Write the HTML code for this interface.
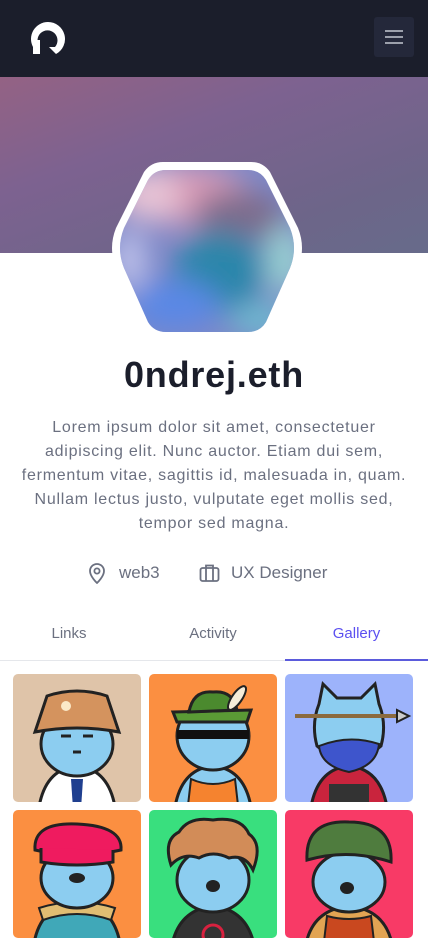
<!DOCTYPE html>
<html><head><meta charset="utf-8"><style>
*{margin:0;padding:0;box-sizing:border-box}
body{width:428px;height:926px;overflow:hidden;background:#fff;font-family:"Liberation Sans",sans-serif;position:relative}
.hdr{position:absolute;left:0;top:0;width:428px;height:77px;background:#1b1e2b}
.menu{position:absolute;left:374px;top:17px;width:40px;height:40px;background:#24283a;border-radius:3px}
.menu i{position:absolute;left:11px;width:18px;height:2px;background:#9ca0ab}
.banner{position:absolute;left:0;top:77px;width:428px;height:176px;background:linear-gradient(160deg,#946284 0%,#7d6290 35%,#6d6589 75%,#676b8a 100%)}
.name{position:absolute;left:0;top:354px;width:428px;text-align:center;font-size:36px;font-weight:bold;color:#1b1e2b;letter-spacing:0.8px}
.bio{position:absolute;left:0;top:416px;width:428px;text-align:center;font-size:16px;line-height:24px;color:#6b7080;letter-spacing:0.75px}
.meta{position:absolute;top:563px;font-size:17px;color:#6b7080}
.tab{position:absolute;top:625px;font-size:15px;color:#6b7080;text-align:center}
.tile{position:absolute;width:128px;height:128px;border-radius:5px;overflow:hidden}
</style></head><body>
<div class="hdr">
<svg style="position:absolute;left:29px;top:20px" width="38" height="37" viewBox="0 0 38 37"><path d="M19 2A17 17 0 0 0 4 27L11 27A10 10 0 1 1 26 27L20 27L27 34A17 17 0 0 0 19 2Z" fill="#fff"/><rect x="4" y="20" width="7" height="14" fill="#fff"/></svg>
<div class="menu"><i style="top:13px"></i><i style="top:19px"></i><i style="top:25px"></i></div>
</div>
<div class="banner"></div>
<svg style="position:absolute;left:100px;top:150px" width="215" height="195" viewBox="100 150 215 195">
<defs>
<clipPath id="c"><path d="M166 170 L248 170 Q260 170 266 180 L290 228 Q298 248 290 268 L266 322 Q260 332 248 332 L166 332 Q154 332 148 322 L124 268 Q116 248 124 228 L148 180 Q154 170 166 170Z"/></clipPath>
<filter id="b"><feGaussianBlur stdDeviation="14"/></filter>
</defs>
<path d="M163 162 L251 162 Q263 162 270 172 L298 228 Q306 248 298 268 L270 326 Q263 336 251 336 L163 336 Q151 336 144 326 L116 268 Q108 248 116 228 L144 172 Q151 162 163 162Z" fill="#fff"/>
<g clip-path="url(#c)">
<rect x="110" y="160" width="200" height="180" fill="#7d88c8"/>
<g filter="url(#b)">
<ellipse cx="180" cy="195" rx="70" ry="30" fill="#d79ab6"/>
<ellipse cx="150" cy="195" rx="30" ry="25" fill="#e8c4d6"/>
<ellipse cx="240" cy="215" rx="45" ry="25" fill="#7d6c8c"/>
<ellipse cx="220" cy="270" rx="45" ry="40" fill="#2b86aa"/>
<ellipse cx="285" cy="260" rx="18" ry="35" fill="#9ad4d2"/>
<ellipse cx="175" cy="305" rx="45" ry="25" fill="#5a88e6"/>
<ellipse cx="130" cy="260" rx="15" ry="30" fill="#c6c8ee"/>
<ellipse cx="260" cy="320" rx="30" ry="15" fill="#6cc0d0"/>
</g></g></svg>
<div class="name">0ndrej.eth</div>
<div class="bio">Lorem ipsum dolor sit amet, consectetuer<br>adipiscing elit. Nunc auctor. Etiam dui sem,<br>fermentum vitae, sagittis id, malesuada in, quam.<br>Nullam lectus justo, vulputate eget mollis sed,<br>tempor sed magna.</div>
<svg style="position:absolute;left:87px;top:562px" width="20" height="22" viewBox="0 0 20 22" fill="none" stroke="#6b7080" stroke-width="1.8"><path d="M10 21s-7-6.5-7-12a7 7 0 0114 0c0 5.5-7 12-7 12z"/><circle cx="10" cy="9" r="2.6"/></svg>
<div class="meta" style="left:119px">web3</div>
<svg style="position:absolute;left:199px;top:563px" width="21" height="20" viewBox="0 0 21 20" fill="none" stroke="#6b7080" stroke-width="1.8"><rect x="1.5" y="5" width="18" height="13" rx="2"/><path d="M7 18V2.5h7V18"/></svg>
<div class="meta" style="left:231px">UX Designer</div>
<div class="tab" style="left:0;width:138px">Links</div>
<div class="tab" style="left:143px;width:140px">Activity</div>
<div class="tab" style="left:285px;width:143px;color:#5b4ff0">Gallery</div>
<div style="position:absolute;left:0;top:660px;width:428px;height:1px;background:#e5e7eb"></div>
<div style="position:absolute;left:285px;top:659px;width:143px;height:2px;background:#5b5bdc"></div>

<div class="tile" style="left:13px;top:674px;background:#dfc4a9"><svg width="128" height="128"><path d="M25 140 Q30 95 64 92 Q98 95 103 140Z" fill="#fff" stroke="#222" stroke-width="3"/><path d="M58 105 L70 105 L68 135 L60 135Z" fill="#1f3f8f"/><ellipse cx="64" cy="70" rx="36" ry="32" fill="#8ccdf0" stroke="#222" stroke-width="3"/><path d="M48 62 L58 62 M70 62 L80 62 M60 78 L68 78" stroke="#222" stroke-width="3"/><path d="M22 58 L34 22 Q64 12 94 22 L106 58 Q64 50 22 58Z" fill="#d4935e" stroke="#222" stroke-width="3"/><circle cx="53" cy="32" r="5" fill="#fbe9c8"/></svg></div>
<div class="tile" style="left:149px;top:674px;background:#fb8f41"><svg width="128" height="128"><path d="M25 140 Q30 95 64 92 Q98 95 103 140Z" fill="#8ccdf0" stroke="#222" stroke-width="3"/><path d="M38 140 L42 105 Q64 115 86 105 L90 140Z" fill="#f5832f" stroke="#222" stroke-width="2"/><ellipse cx="64" cy="62" rx="36" ry="34" fill="#8ccdf0" stroke="#222" stroke-width="3"/><rect x="28" y="56" width="72" height="9" fill="#111"/><path d="M24 38 L102 36 L98 48 L28 48Z" fill="#5a9a35" stroke="#222" stroke-width="3"/><path d="M40 38 Q44 16 64 18 Q84 16 88 36Z" fill="#4b8a2e" stroke="#222" stroke-width="3"/><ellipse cx="88" cy="24" rx="5" ry="14" transform="rotate(35 88 24)" fill="#f5ecd8" stroke="#222" stroke-width="2"/></svg></div>
<div class="tile" style="left:285px;top:674px;background:#9db3fb"><svg width="128" height="128"><path d="M25 140 Q30 95 64 92 Q98 95 103 140Z" fill="#c9243d" stroke="#222" stroke-width="3"/><rect x="44" y="110" width="40" height="25" fill="#333"/><path d="M34 30 L38 10 L52 24 L76 24 L90 10 L94 30 Q102 50 96 72 Q64 100 32 72 Q26 50 34 30Z" fill="#8ccdf0" stroke="#222" stroke-width="3"/><path d="M34 72 Q64 60 94 70 Q92 92 64 98 Q36 92 34 72Z" fill="#3e55cc" stroke="#222" stroke-width="2"/><path d="M10 42 L118 42" stroke="#8b6a3e" stroke-width="4"/><path d="M112 36 L124 42 L112 48Z" fill="#ccc" stroke="#222" stroke-width="2"/></svg></div>

<div class="tile" style="left:13px;top:810px;background:#fb8f41"><svg width="128" height="128"><path d="M20 140 Q25 95 64 92 Q103 95 108 140Z" fill="#40a8b8" stroke="#222" stroke-width="3"/><path d="M26 98 Q64 86 102 98 L98 110 Q64 98 30 110Z" fill="#e1bd72" stroke="#222" stroke-width="2"/><ellipse cx="64" cy="68" rx="36" ry="30" fill="#8ccdf0" stroke="#222" stroke-width="3"/><path d="M22 40 Q20 12 64 14 Q110 16 108 40 Q64 50 22 40Z" fill="#ef1b5f" stroke="#222" stroke-width="3"/><path d="M28 38 L28 52 Q64 58 100 52 L100 40" fill="#ef1b5f" stroke="#222" stroke-width="3"/><ellipse cx="64" cy="68" rx="8" ry="5" fill="#222"/></svg></div>
<div class="tile" style="left:149px;top:810px;background:#39df7e"><svg width="128" height="128"><path d="M22 140 Q28 100 64 96 Q100 100 106 140Z" fill="#333" stroke="#222" stroke-width="3"/><circle cx="64" cy="125" r="10" fill="none" stroke="#d8213f" stroke-width="3"/><ellipse cx="64" cy="70" rx="36" ry="32" fill="#8ccdf0" stroke="#222" stroke-width="3"/><path d="M22 55 Q14 30 30 22 Q40 6 64 10 Q92 6 100 24 Q114 34 104 60 Q96 44 80 48 Q64 40 50 48 Q34 42 22 55Z" fill="#d28c58" stroke="#222" stroke-width="3"/><ellipse cx="64" cy="76" rx="7" ry="6" fill="#222"/></svg></div>
<div class="tile" style="left:285px;top:810px;background:#f83a66"><svg width="128" height="128"><path d="M20 140 Q25 100 64 96 Q103 100 108 140Z" fill="#e2a453" stroke="#222" stroke-width="3"/><path d="M38 140 L42 106 Q64 112 86 106 L90 140Z" fill="#c9481f" stroke="#222" stroke-width="2"/><ellipse cx="64" cy="72" rx="36" ry="30" fill="#8ccdf0" stroke="#222" stroke-width="3"/><path d="M22 50 Q20 10 64 12 Q108 12 106 52 Q64 38 22 50Z" fill="#4f7c3e" stroke="#222" stroke-width="3"/><ellipse cx="62" cy="78" rx="7" ry="6" fill="#222"/></svg></div>
</body></html>
